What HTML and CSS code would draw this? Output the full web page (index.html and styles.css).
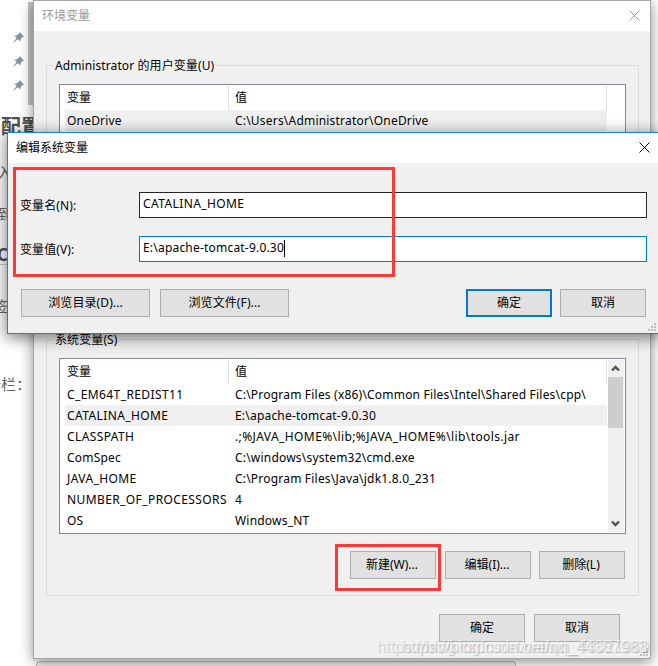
FILE: index.html
```
<!DOCTYPE html>
<html lang="zh-CN">
<head>
  <meta charset="UTF-8">
  <title>环境变量</title>
  <link rel="stylesheet" href="styles.css">
</head>
<body>

<svg class="defs">
  <symbol id="pin" viewBox="0 0 11 11">
    <path d="M6.4 0 L11 4.4 L9.6 5.2 L7.8 7 L7.4 9.6 L4.8 7.2 L0.4 10.8 L0 10.4 L3.6 6 L1.2 3.7 L4 3.2 L5.9 1.4 Z"/>
  </symbol>
  <symbol id="close" viewBox="0 0 11 11">
    <path d="M0.5 0.5 L10.5 10.5 M10.5 0.5 L0.5 10.5"/>
  </symbol>
  <symbol id="grip" viewBox="0 0 8 8">
    <path d="M6 0h2v2h-2z M3 3h2v2h-2z M6 3h2v2h-2z M0 6h2v2h-2z M3 6h2v2h-2z M6 6h2v2h-2z"/>
  </symbol>
</svg>

<div class="page">
  <div class="pins">
    <svg class="pin"><use href="#pin"/></svg>
    <svg class="pin"><use href="#pin"/></svg>
    <svg class="pin"><use href="#pin"/></svg>
  </div>
  <h2>配置</h2>
  <p class="cut">入</p>
  <p class="cut">到</p>
  <h3>C</h3>
  <p class="cut sign">签</p>
  <p class="last">行栏：</p>
</div>
<div class="page-scroll"></div>
<div class="page-box"></div>

<div class="window main">
  <div class="title">环境变量<svg class="close"><use href="#close"/></svg></div>
  <fieldset class="user">
    <legend>Administrator 的用户变量(U)</legend>
    <div class="list">
      <div class="table">
        <div class="row head"><span>变量</span><span>值</span></div>
        <div class="row selected"><span>OneDrive</span><span>C:\Users\Administrator\OneDrive</span></div>
      </div>
    </div>
  </fieldset>
  <fieldset class="system">
    <legend>系统变量(S)</legend>
    <div class="list">
      <div class="table">
        <div class="row head"><span>变量</span><span>值</span></div>
        <div class="row"><span class="caps">C_EM64T_REDIST11</span><span>C:\Program Files (x86)\Common Files\Intel\Shared Files\cpp\</span></div>
        <div class="row selected"><span class="caps">CATALINA_HOME</span><span>E:\apache-tomcat-9.0.30</span></div>
        <div class="row"><span class="caps">CLASSPATH</span><span class="caps">.;%JAVA_HOME%\lib;%JAVA_HOME%\lib\tools.jar</span></div>
        <div class="row"><span>ComSpec</span><span>C:\windows\system32\cmd.exe</span></div>
        <div class="row"><span class="caps">JAVA_HOME</span><span>C:\Program Files\Java\jdk1.8.0_231</span></div>
        <div class="row"><span class="caps">NUMBER_OF_PROCESSORS</span><span>4</span></div>
        <div class="row"><span>OS</span><span>Windows_NT</span></div>
      </div>
      <div class="scrollbar">
        <svg class="arrow" viewBox="0 0 15 17"><path d="M4 10.5 L7.5 7 L11 10.5"/></svg>
        <div class="thumb"></div>
        <svg class="arrow down" viewBox="0 0 15 17"><path d="M4 6.5 L7.5 10 L11 6.5"/></svg>
      </div>
    </div>
    <div class="actions">
      <button>新建(W)...</button>
      <button>编辑(I)...</button>
      <button>删除(L)</button>
    </div>
  </fieldset>
  <div class="footer">
    <button>确定</button>
    <button>取消</button>
  </div>
  <svg class="grip"><use href="#grip"/></svg>
</div>

<div class="window dialog">
  <div class="title">编辑系统变量<svg class="close"><use href="#close"/></svg></div>
  <div class="field"><label>变量名(N):</label><div class="input caps">CATALINA_HOME</div></div>
  <div class="field"><label>变量值(V):</label><div class="input focus">E:\apache-tomcat-9.0.30<i class="caret"></i></div></div>
  <div class="buttons">
    <button class="wide">浏览目录(D)...</button>
    <button class="wide">浏览文件(F)...</button>
    <button class="default">确定</button>
    <button>取消</button>
  </div>
  <svg class="grip"><use href="#grip"/></svg>
</div>

<div class="mark mark-fields"></div>
<div class="mark mark-new"></div>
<div class="watermark">https://blog.csdn.net/weixin_43021960</div>
<div class="watermark second">https://blog.csdn.net/qq_44387983</div>

</body>
</html>
```

FILE: styles.css
```
* {
  box-sizing: border-box;
}

body {
  position: relative;
  width: 658px;
  height: 666px;
  margin: 0;
  overflow: hidden;
  background: #fff;
  color: #000;
  font: 12px/16px "Noto Sans", "Noto Sans CJK SC", sans-serif;
}

.defs {
  display: none;
}

/* page behind the windows */
.page {
  width: 33px;
  overflow: hidden;
  color: #666;
}

.pins {
  display: flex;
  flex-direction: column;
  gap: 13px;
  height: 112px;
  padding: 32px 0 0 13px;
}

.pin {
  width: 11px;
  height: 11px;
  fill: #8796a0;
}

.page h2 {
  height: 46px;
  margin: 0;
  padding-left: 1px;
  font-size: 20px;
  line-height: 30px;
  color: #4f4f4f;
  white-space: nowrap;
}

.page p,
.page h3 {
  margin: 0;
  white-space: nowrap;
}

.page .cut {
  width: 8px;
  height: 42px;
  overflow: hidden;
  font-size: 15px;
  line-height: 28px;
  text-indent: -3px;
}

.page h3 {
  width: 8px;
  height: 23px;
  border-bottom: 1px solid #ccc;
  font-size: 17px;
  line-height: 25px;
  text-indent: -3px;
  color: #4f4f4f;
}

.page .sign {
  margin-top: 27px;
  text-indent: -7px;
}

.page .last {
  margin-top: 35px;
  font-family: "Noto Sans CJK TC", sans-serif;
  font-size: 15px;
  line-height: 29px;
  text-indent: -14px;
}

.page-scroll {
  position: absolute;
  left: 28px;
  top: 2px;
  width: 5px;
  height: 103px;
  background: #c4c4c4;
}

.page-box {
  position: absolute;
  left: 36px;
  top: 661px;
  width: 480px;
  height: 20px;
  border: 1px solid #b8b8b8;
  border-radius: 4px;
  background: #f0f0f0;
}

/* windows */
.window {
  position: absolute;
  background: #f0f0f0;
}

.main {
  left: 33px;
  top: 0;
  width: 618px;
  height: 659px;
  border: 1px solid #a5a5a5;
  box-shadow: 0 3px 13px rgba(0, 0, 0, 0.45);
}

.dialog {
  left: 7px;
  top: 132px;
  width: 652px;
  height: 202px;
  border: 1px solid #1883d7;
  box-shadow: 0 3px 14px 1px rgba(0, 0, 0, 0.5);
}

.title {
  display: flex;
  justify-content: space-between;
  align-items: center;
  height: 30px;
  padding: 0 8px;
  background: #fff;
}

.main .title {
  padding-right: 10px;
  color: #999;
}

.close {
  width: 11px;
  height: 11px;
  margin-bottom: 2px;
  fill: none;
  stroke: #000;
}

.main .close {
  stroke: #999;
}

.grip {
  position: absolute;
  right: 2px;
  bottom: 2px;
  width: 8px;
  height: 8px;
  fill: #bfbfbf;
}

fieldset {
  width: 592px;
  margin: 0 12px;
  padding: 0 12px;
  border: 1px solid #dcdcdc;
}

legend {
  height: 16px;
  margin-left: -6px;
  padding: 0 2px;
  line-height: 18px;
  letter-spacing: 0.1px;
}

.user {
  height: 264px;
  margin-top: 26px;
}

.system {
  height: 265px;
  margin-top: 10px;
}

.list {
  display: flex;
  width: 567px;
  height: 176px;
  margin-top: 11px;
  padding: 1px 1px 1px 5px;
  border: 1px solid #828790;
  background: #fff;
}

.table {
  width: 543px;
}

.row {
  display: flex;
  height: 21px;
  line-height: 21px;
  white-space: nowrap;
  letter-spacing: 0.2px;
}

.row span {
  width: 168px;
  padding-left: 2px;
}

.row .caps,
.input.caps {
  letter-spacing: 0.4px;
}

.row.head {
  width: 542px;
  height: 24px;
  border-right: 1px solid #e0e0e0;
  line-height: 23px;
  letter-spacing: 0;
}

.row.head span:first-child {
  width: 164px;
  margin-right: 4px;
  border-right: 1px solid #e0e0e0;
}

.row.selected {
  width: 542px;
  background: #f0f0f0;
}

.scrollbar {
  display: flex;
  flex-direction: column;
  width: 16px;
  background: #f0f0f0;
}

.arrow {
  width: 15px;
  height: 17px;
  fill: none;
  stroke: #505050;
  stroke-width: 2.4;
}

.arrow.down {
  margin-top: auto;
}

.thumb {
  width: 15px;
  height: 51px;
  background: #cdcdcd;
}

button {
  width: 86px;
  height: 28px;
  padding: 0;
  border: 1px solid #adadad;
  background: #e1e1e1;
  color: #000;
  font: inherit;
}

.actions {
  display: flex;
  justify-content: flex-end;
  gap: 8px;
  width: 566px;
  margin-top: 17px;
}

.actions button:first-child {
  margin-right: 1px;
}

.actions button {
  padding-right: 2px;
}

.footer {
  display: flex;
  justify-content: flex-end;
  gap: 9px;
  padding: 18px 30px 0 0;
}

/* edit dialog */
.field {
  display: flex;
  align-items: center;
  height: 26px;
  margin: 18px 11px 0 12px;
}

.title + .field {
  margin-top: 29px;
}

.field label {
  width: 119px;
  padding-top: 1px;
  letter-spacing: 0.1px;
}

.input {
  display: flex;
  flex: 1;
  height: 26px;
  padding: 3px 3px;
  border: 1px solid #262626;
  background: #fff;
  letter-spacing: 0.2px;
}

.input.focus {
  border-color: #0078d7;
}

.caret {
  width: 1px;
  height: 17px;
  background: #000;
}

.buttons {
  display: flex;
  gap: 8px;
  margin: 27px 12px 0 13px;
}

.buttons .wide {
  width: 129px;
  margin-right: 2px;
  letter-spacing: 0.1px;
}

.buttons .default {
  margin-left: auto;
  border: 2px solid #0078d7;
}

/* red markers */
.mark {
  position: absolute;
  border: 3px solid #ff3838;
}

.mark-fields {
  left: 13px;
  top: 167px;
  width: 382px;
  height: 110px;
}

.mark-new {
  left: 335px;
  top: 544px;
  width: 106px;
  height: 47px;
}

/* two stamps printed over each other */
.watermark {
  position: absolute;
  right: 9px;
  top: 638px;
  color: rgba(255, 255, 255, 0.55);
  font: 16px/18px "Liberation Sans", Arial, sans-serif;
  text-shadow: 1px 1px 1px rgba(0, 0, 0, 0.18);
}

.watermark.second {
  right: 11px;
}
```
